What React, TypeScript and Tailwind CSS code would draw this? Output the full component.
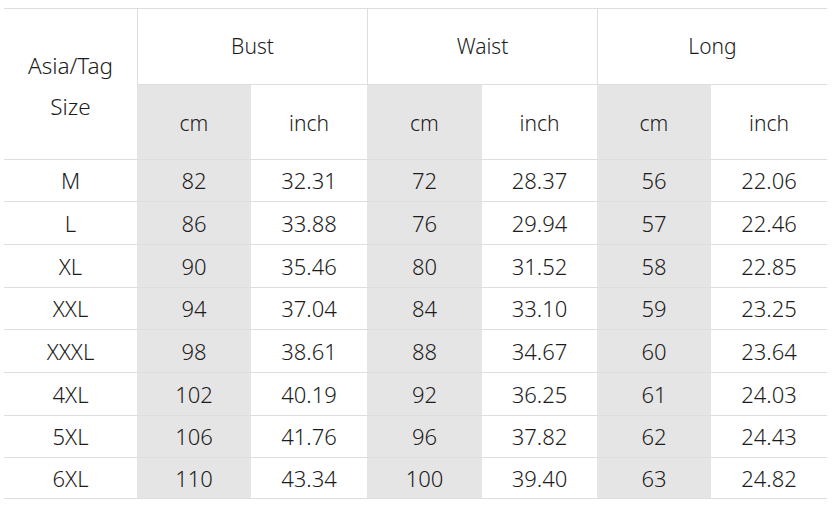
const rows = [
  ["M", "82", "32.31", "72", "28.37", "56", "22.06"],
  ["L", "86", "33.88", "76", "29.94", "57", "22.46"],
  ["XL", "90", "35.46", "80", "31.52", "58", "22.85"],
  ["XXL", "94", "37.04", "84", "33.10", "59", "23.25"],
  ["XXXL", "98", "38.61", "88", "34.67", "60", "23.64"],
  ["4XL", "102", "40.19", "92", "36.25", "61", "24.03"],
  ["5XL", "106", "41.76", "96", "37.82", "62", "24.43"],
  ["6XL", "110", "43.34", "100", "39.40", "63", "24.82"],
];

const heights = ["h-[42px]", "h-[43px]", "h-[43px]", "h-[42px]", "h-[43px]", "h-[43px]", "h-[42px]", "h-[41px]"];

export default function App() {
  return (
    <div className="w-[838px] h-[506px] bg-white pt-2 pl-1 text-[#1c1c1c] font-['Noto_Sans',sans-serif] font-light">
      <div className="grid grid-cols-[133px_114px_116px_115px_115px_114px_116px] w-[823px] border-t border-[#dedede]">
        <div className="row-span-2 flex flex-col items-center justify-center border-b border-[#dedede] text-[22.5px] leading-[41px] pt-1">
          <span>Asia/Tag</span>
          <span>Size</span>
        </div>
        {["Bust", "Waist", "Long"].map((h) => (
          <div key={h} className="col-span-2 h-[76px] flex items-center justify-center border-l border-b border-[#dedede] text-[21px]">
            {h}
          </div>
        ))}
        {[0, 1, 2].map((i) => (
          <div key={i} className="contents">
            <div className="h-[75px] flex items-center justify-center bg-[#e6e5e6] border-b border-[#dedede] text-[21px] pt-1">cm</div>
            <div className="h-[75px] flex items-center justify-center border-b border-[#dedede] text-[21px] pt-1">inch</div>
          </div>
        ))}
        {rows.map((r, ri) =>
          r.map((v, ci) => (
            <div
              key={ri + "-" + ci}
              className={`${heights[ri]} flex items-center justify-center border-b border-[#dedede] text-[22px] ${ci % 2 === 1 ? "bg-[#e6e5e6]" : ""}`}
            >
              {v}
            </div>
          ))
        )}
      </div>
    </div>
  );
}
